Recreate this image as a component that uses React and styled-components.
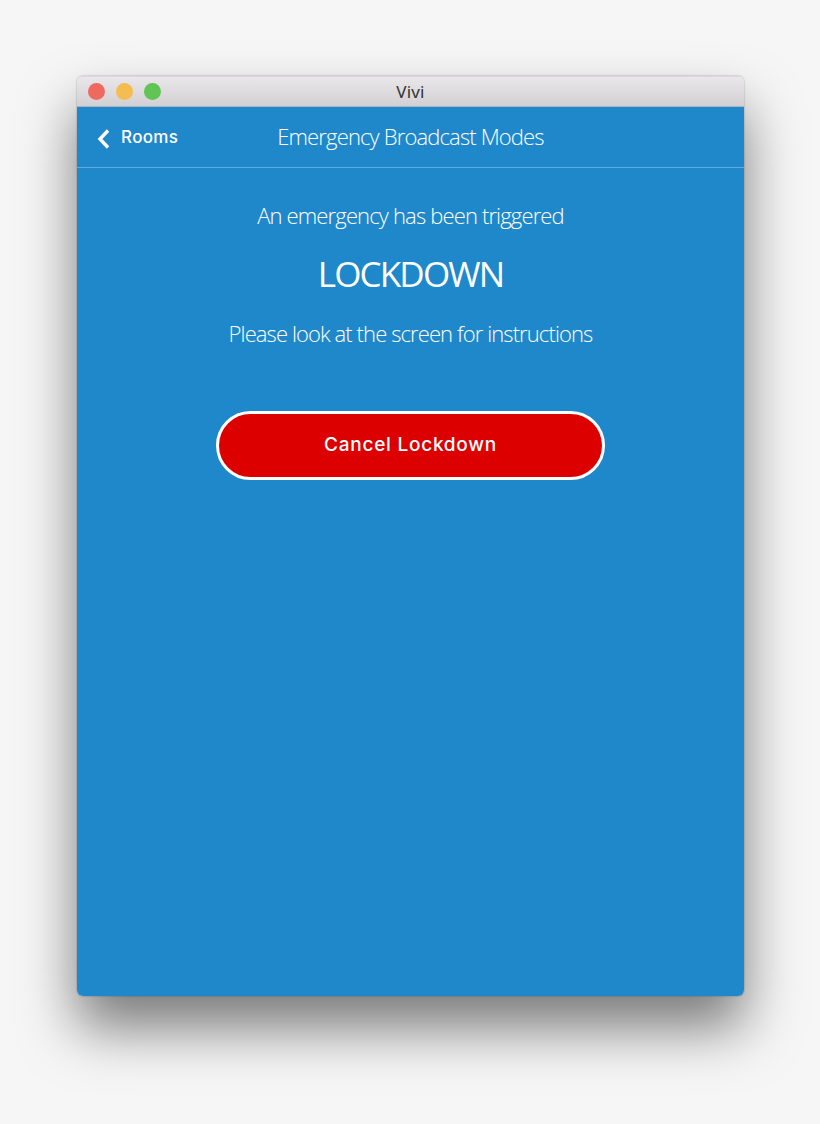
import React from "react";
import styled, { createGlobalStyle } from "styled-components";

const GlobalStyle = createGlobalStyle`
  html, body {
    margin: 0;
    padding: 0;
    background: #f6f6f6;
  }
`;

const Page = styled.div`
  width: 820px;
  height: 1124px;
  padding: 76px 76px 0 77px;
  box-sizing: border-box;
  overflow: hidden;
`;

const Window = styled.div`
  height: 920px;
  border-radius: 6px;
  overflow: hidden;
  display: flex;
  flex-direction: column;
  box-shadow: 0 32px 55px rgba(0, 0, 0, 0.5), 0 0 2px rgba(0, 0, 0, 0.35);
`;

const TitleBar = styled.div`
  height: 31px;
  flex: none;
  box-sizing: border-box;
  display: flex;
  align-items: center;
  position: relative;
  padding-left: 11px;
  gap: 11px;
  background: linear-gradient(#e9e7e9, #d2d0d2);
  border-top: 1px solid #d8d8d8;
  border-bottom: 1px solid #a9b4bd;
`;

const Light = styled.span`
  width: 17px;
  height: 17px;
  border-radius: 50%;
  background: ${(p) => p.$color};
`;

const WindowTitle = styled.div`
  position: absolute;
  left: 0;
  right: 0;
  top: 4px;
  text-align: center;
  font: 400 17px/22px "Noto Sans", sans-serif;
  letter-spacing: 0.2px;
  color: #333;
`;

const Content = styled.div`
  flex: 1;
  background: #1f88cb;
  display: flex;
  flex-direction: column;
  align-items: center;
`;

const Header = styled.div`
  width: 100%;
  height: 61px;
  flex: none;
  box-sizing: border-box;
  padding-bottom: 2px;
  border-bottom: 1px solid #62abdb;
  display: flex;
  align-items: center;
  justify-content: center;
  position: relative;
`;

const BackLink = styled.div`
  position: absolute;
  left: 20px;
  top: 17px;
  display: flex;
  align-items: center;
  gap: 10px;
  font: 500 17px/22px Inter, sans-serif;
  letter-spacing: 0.35px;
  color: #fff;
`;

const BackIcon = styled.svg`
  margin-top: 4px;
`;

const Message = styled.div`
  font: 300 22px/30px "Open Sans", sans-serif;
  letter-spacing: ${(p) => p.$spacing || "-0.85px"};
  color: #fff;
  margin-top: ${(p) => p.$top || 0}px;
  white-space: nowrap;
`;

const Heading = styled.div`
  font: 400 35px/44px "Open Sans", sans-serif;
  letter-spacing: -1.85px;
  color: #fff;
  margin-top: 22px;
`;

const CancelButton = styled.button`
  width: 389px;
  height: 69px;
  margin-top: 63px;
  box-sizing: border-box;
  border: 3px solid #fff;
  border-radius: 35px;
  background: #dc0000;
  color: #fff;
  font: 500 19px/22px Inter, sans-serif;
  letter-spacing: 0.75px;
  padding: 0 0 2px;
`;

export default function App() {
  return (
    <Page>
      <GlobalStyle />
      <Window>
        <TitleBar>
          <Light $color="#ee6a5f" />
          <Light $color="#f5bd4f" />
          <Light $color="#61c454" />
          <WindowTitle>Vivi</WindowTitle>
        </TitleBar>
        <Content>
          <Header>
            <BackLink>
              <BackIcon width="14" height="22" viewBox="0 0 14 22">
                <path d="M11 2.5 3 11l8 8.5" fill="none" stroke="#fff" strokeWidth="3.4" />
              </BackIcon>
              Rooms
            </BackLink>
            <Message>Emergency Broadcast Modes</Message>
          </Header>
          <Message $top={32}>An emergency has been triggered</Message>
          <Heading>LOCKDOWN</Heading>
          <Message $top={22} $spacing="-0.9px">Please look at the screen for instructions</Message>
          <CancelButton>Cancel Lockdown</CancelButton>
        </Content>
      </Window>
    </Page>
  );
}
